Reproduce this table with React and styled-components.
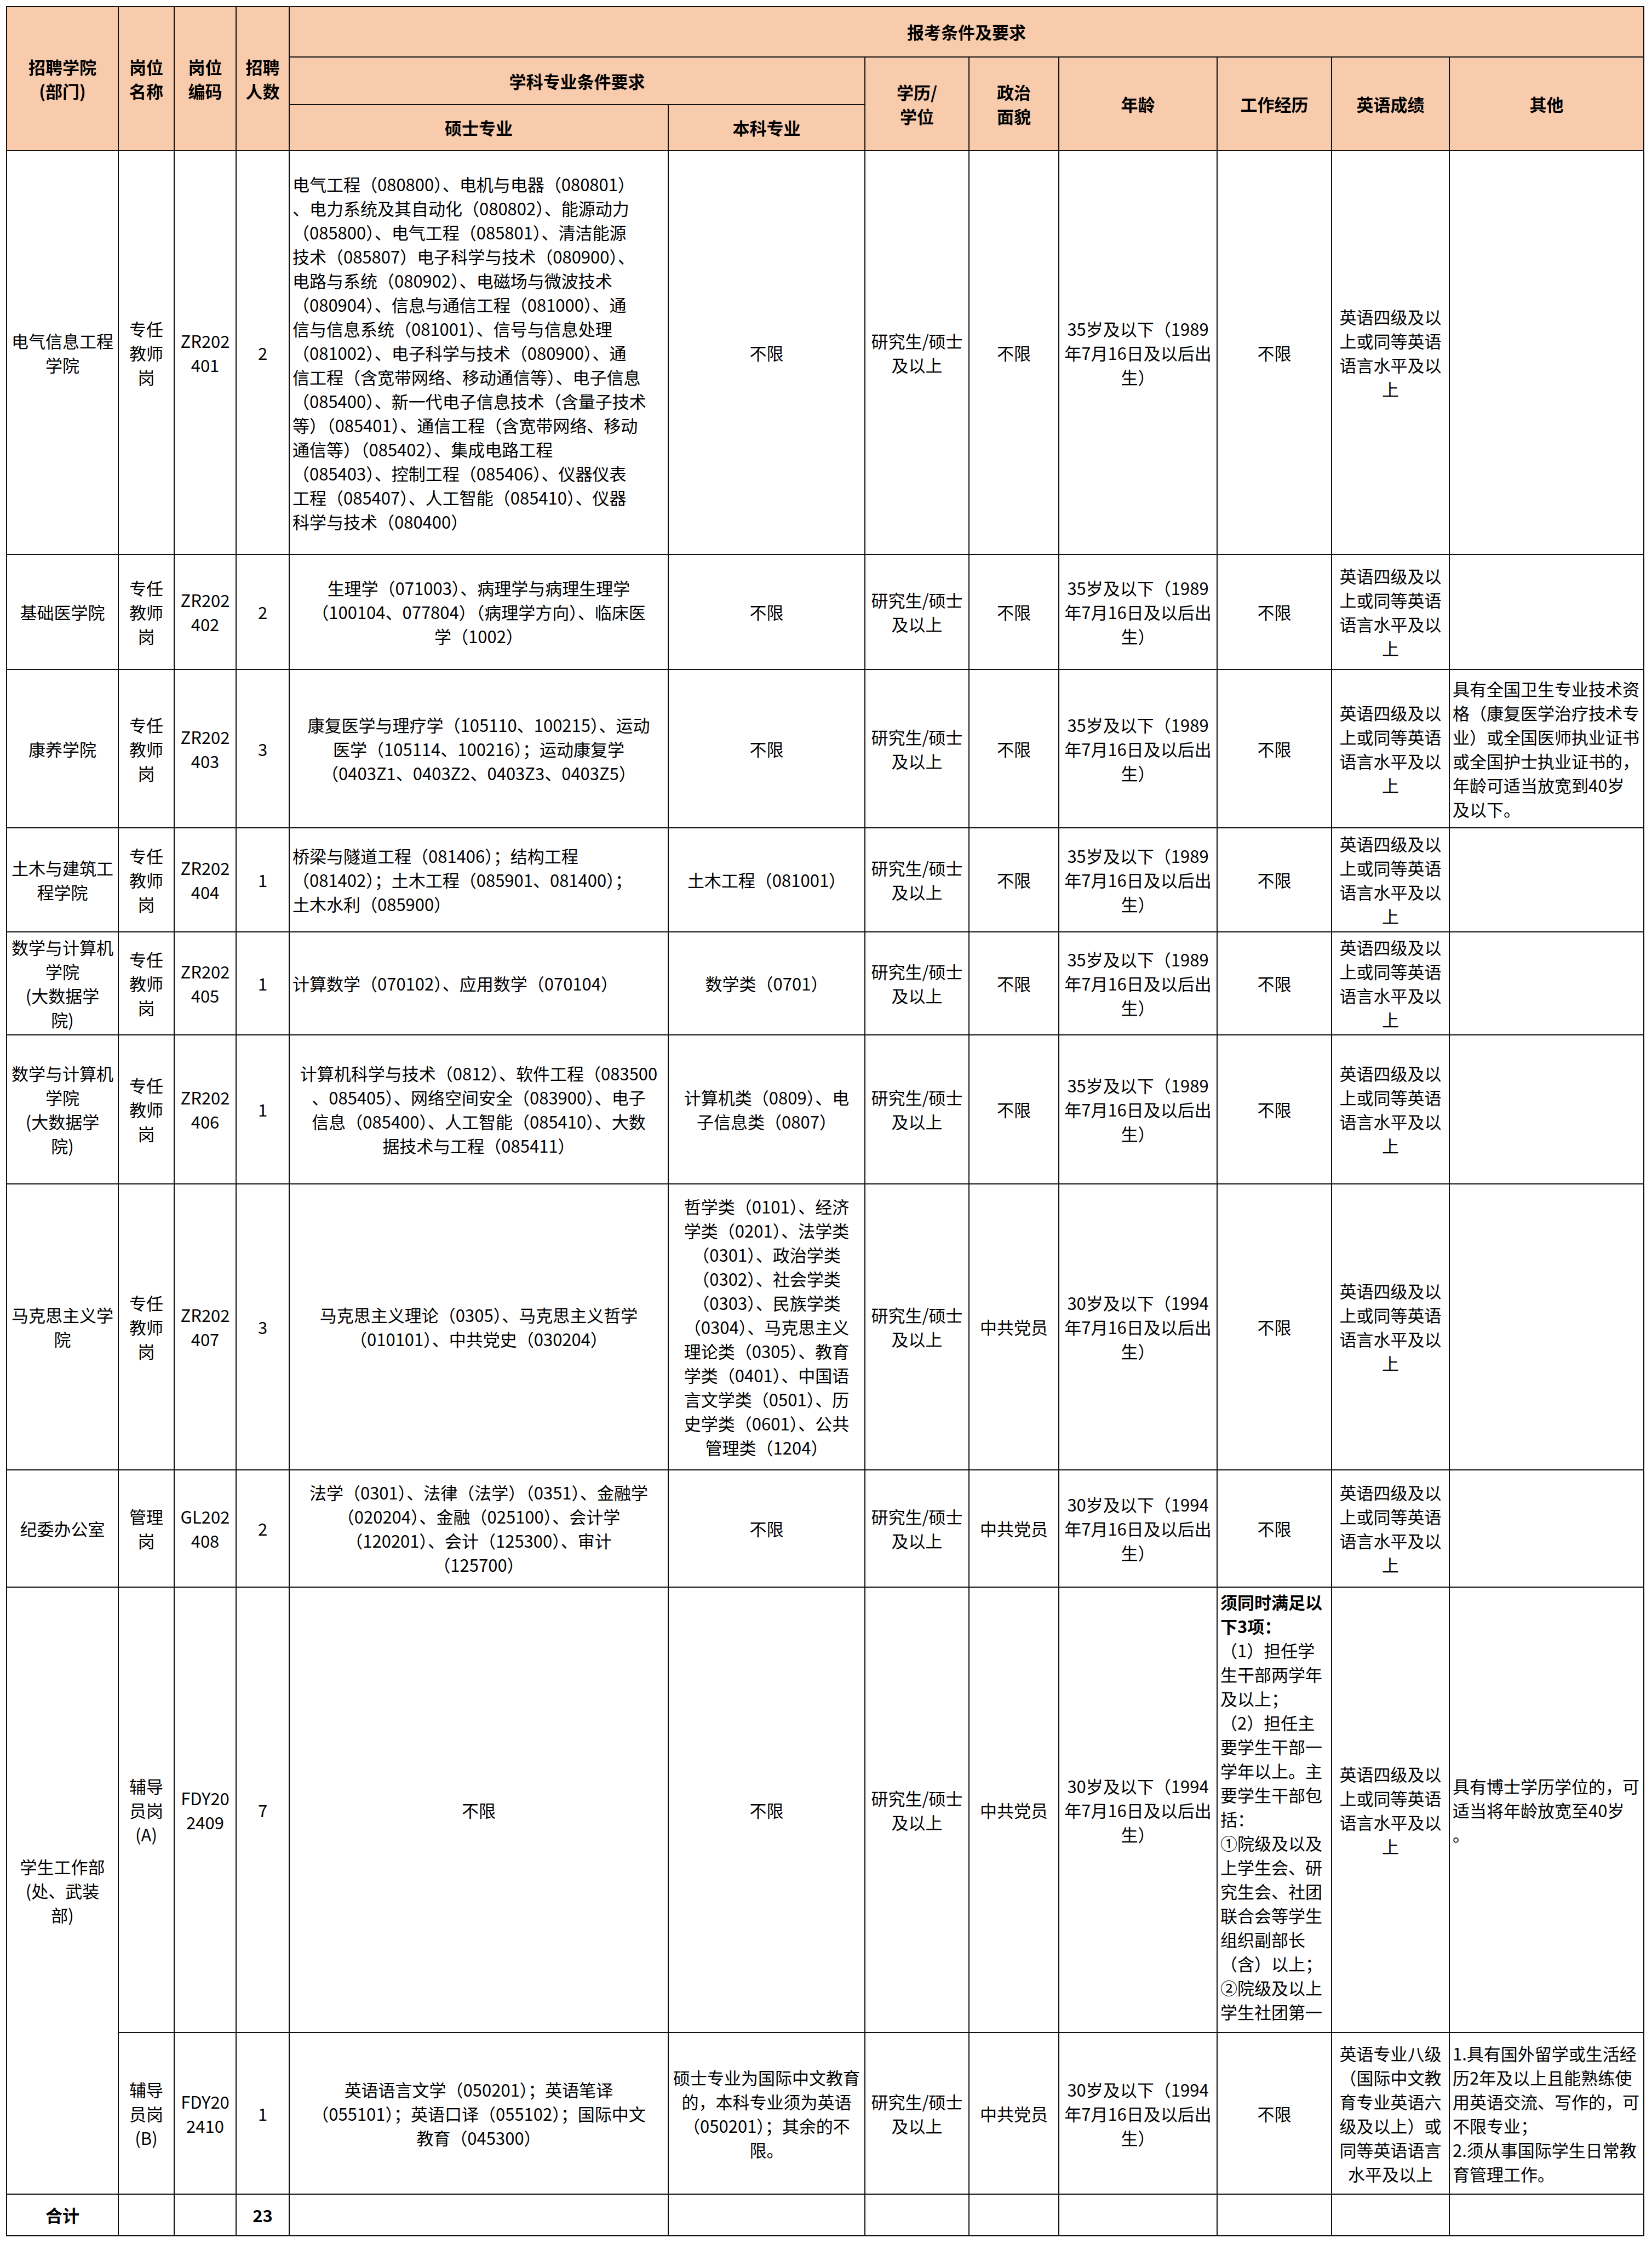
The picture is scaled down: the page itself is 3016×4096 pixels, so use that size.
import React from 'react';
import styled, { createGlobalStyle } from 'styled-components';

const COLS = [204, 102, 113, 97, 692, 359, 190, 164, 289, 209, 215, 355];

const DEG = ['研究生/硕士', '及以上'];
const AGE35 = ['35岁及以下（1989', '年7月16日及以后出', '生）'];
const AGE30 = ['30岁及以下（1994', '年7月16日及以后出', '生）'];
const CET4 = ['英语四级及以', '上或同等英语', '语言水平及以', '上'];
const TEACHER = ['专任', '教师', '岗'];
const MATH_DEPT = ['数学与计算机', '学院', '(大数据学', '院)'];

const rows = [
  {
    h: 737,
    dept: { lines: ['电气信息工程', '学院'] },
    post: TEACHER,
    code: ['ZR202', '401'],
    num: '2',
    master: {
      align: 'left',
      lines: [
        '电气工程（080800）、电机与电器（080801）',
        '、电力系统及其自动化（080802）、能源动力',
        '（085800）、电气工程（085801）、清洁能源',
        '技术（085807）电子科学与技术（080900）、',
        '电路与系统（080902）、电磁场与微波技术',
        '（080904）、信息与通信工程（081000）、通',
        '信与信息系统（081001）、信号与信息处理',
        '（081002）、电子科学与技术（080900）、通',
        '信工程（含宽带网络、移动通信等）、电子信息',
        '（085400）、新一代电子信息技术（含量子技术',
        '等）（085401）、通信工程（含宽带网络、移动',
        '通信等）（085402）、集成电路工程',
        '（085403）、控制工程（085406）、仪器仪表',
        '工程（085407）、人工智能（085410）、仪器',
        '科学与技术（080400）',
      ],
    },
    bachelor: { lines: ['不限'] },
    politics: ['不限'],
    age: AGE35,
    work: ['不限'],
    english: CET4,
  },
  {
    h: 210,
    dept: { lines: ['基础医学院'] },
    post: TEACHER,
    code: ['ZR202', '402'],
    num: '2',
    master: {
      lines: [
        '生理学（071003）、病理学与病理生理学',
        '（100104、077804）（病理学方向）、临床医',
        '学（1002）',
      ],
    },
    bachelor: { lines: ['不限'] },
    politics: ['不限'],
    age: AGE35,
    work: ['不限'],
    english: CET4,
  },
  {
    h: 289,
    dept: { lines: ['康养学院'] },
    post: TEACHER,
    code: ['ZR202', '403'],
    num: '3',
    master: {
      lines: [
        '康复医学与理疗学（105110、100215）、运动',
        '医学（105114、100216）；运动康复学',
        '（0403Z1、0403Z2、0403Z3、0403Z5）',
      ],
    },
    bachelor: { lines: ['不限'] },
    politics: ['不限'],
    age: AGE35,
    work: ['不限'],
    english: CET4,
    other: [
      '具有全国卫生专业技术资',
      '格（康复医学治疗技术专',
      '业）或全国医师执业证书',
      '或全国护士执业证书的，',
      '年龄可适当放宽到40岁',
      '及以下。',
    ],
  },
  {
    h: 190,
    dept: { lines: ['土木与建筑工', '程学院'] },
    post: TEACHER,
    code: ['ZR202', '404'],
    num: '1',
    master: {
      align: 'left',
      lines: [
        '桥梁与隧道工程（081406）；结构工程',
        '（081402）；土木工程（085901、081400）；',
        '土木水利（085900）',
      ],
    },
    bachelor: { lines: ['土木工程（081001）'] },
    politics: ['不限'],
    age: AGE35,
    work: ['不限'],
    english: CET4,
  },
  {
    h: 188,
    dept: { lines: MATH_DEPT },
    post: TEACHER,
    code: ['ZR202', '405'],
    num: '1',
    master: { align: 'left', lines: ['计算数学（070102）、应用数学（070104）'] },
    bachelor: { lines: ['数学类（0701）'] },
    politics: ['不限'],
    age: AGE35,
    work: ['不限'],
    english: CET4,
  },
  {
    h: 272,
    dept: { lines: MATH_DEPT },
    post: TEACHER,
    code: ['ZR202', '406'],
    num: '1',
    master: {
      lines: [
        '计算机科学与技术（0812）、软件工程（083500',
        '、085405）、网络空间安全（083900）、电子',
        '信息（085400）、人工智能（085410）、大数',
        '据技术与工程（085411）',
      ],
    },
    bachelor: { lines: ['计算机类（0809）、电', '子信息类（0807）'] },
    politics: ['不限'],
    age: AGE35,
    work: ['不限'],
    english: CET4,
  },
  {
    h: 522,
    dept: { lines: ['马克思主义学', '院'] },
    post: TEACHER,
    code: ['ZR202', '407'],
    num: '3',
    master: {
      lines: ['马克思主义理论（0305）、马克思主义哲学', '（010101）、中共党史（030204）'],
    },
    bachelor: {
      lines: [
        '哲学类（0101）、经济',
        '学类（0201）、法学类',
        '（0301）、政治学类',
        '（0302）、社会学类',
        '（0303）、民族学类',
        '（0304）、马克思主义',
        '理论类（0305）、教育',
        '学类（0401）、中国语',
        '言文学类（0501）、历',
        '史学类（0601）、公共',
        '管理类（1204）',
      ],
    },
    politics: ['中共党员'],
    age: AGE30,
    work: ['不限'],
    english: CET4,
  },
  {
    h: 214,
    dept: { lines: ['纪委办公室'] },
    post: ['管理', '岗'],
    code: ['GL202', '408'],
    num: '2',
    master: {
      lines: [
        '法学（0301）、法律（法学）（0351）、金融学',
        '（020204）、金融（025100）、会计学',
        '（120201）、会计（125300）、审计',
        '（125700）',
      ],
    },
    bachelor: { lines: ['不限'] },
    politics: ['中共党员'],
    age: AGE30,
    work: ['不限'],
    english: CET4,
  },
  {
    h: 813,
    dept: { lines: ['学生工作部', '(处、武装', '部)'], span: 2 },
    post: ['辅导', '员岗', '(A)'],
    code: ['FDY20', '2409'],
    num: '7',
    master: { lines: ['不限'] },
    bachelor: { lines: ['不限'] },
    politics: ['中共党员'],
    age: AGE30,
    // the sheet cuts this cell off after the last line shown
    workNote: {
      head: ['须同时满足以', '下3项：'],
      lines: [
        '（1）担任学',
        '生干部两学年',
        '及以上；',
        '（2）担任主',
        '要学生干部一',
        '学年以上。主',
        '要学生干部包',
        '括：',
        '①院级及以及',
        '上学生会、研',
        '究生会、社团',
        '联合会等学生',
        '组织副部长',
        '（含）以上；',
        '②院级及以上',
        '学生社团第一',
      ],
    },
    english: CET4,
    other: ['具有博士学历学位的，可', '适当将年龄放宽至40岁', '。'],
  },
  {
    h: 295,
    dept: null,
    post: ['辅导', '员岗', '(B)'],
    code: ['FDY20', '2410'],
    num: '1',
    master: {
      lines: [
        '英语语言文学（050201）；英语笔译',
        '（055101）；英语口译（055102）；国际中文',
        '教育（045300）',
      ],
    },
    bachelor: {
      lines: ['硕士专业为国际中文教育', '的，本科专业须为英语', '（050201）；其余的不', '限。'],
    },
    politics: ['中共党员'],
    age: AGE30,
    work: ['不限'],
    english: ['英语专业八级', '（国际中文教', '育专业英语六', '级及以上）或', '同等英语语言', '水平及以上'],
    other: [
      '1.具有国外留学或生活经',
      '历2年及以上且能熟练使',
      '用英语交流、写作的，可',
      '不限专业；',
      '2.须从事国际学生日常教',
      '育管理工作。',
    ],
  },
];

const Lines = ({ lines }) => (
  <>
    {lines.map((l, i) => (
      <Line key={i}>{l}</Line>
    ))}
  </>
);

const App = () => {
  return (
    <>
      <GlobalStyle />
      <Page>
        <Table>
          <colgroup>
            {COLS.map((w, i) => (
              <col key={i} style={{ width: w }} />
            ))}
          </colgroup>
          <thead>
            <tr style={{ height: 92 }}>
              <Th rowSpan={3}><Lines lines={['招聘学院', '(部门)']} /></Th>
              <Th rowSpan={3}><Lines lines={['岗位', '名称']} /></Th>
              <Th rowSpan={3}><Lines lines={['岗位', '编码']} /></Th>
              <Th rowSpan={3}><Lines lines={['招聘', '人数']} /></Th>
              <Th colSpan={8}>报考条件及要求</Th>
            </tr>
            <tr style={{ height: 87 }}>
              <Th colSpan={2}>学科专业条件要求</Th>
              <Th rowSpan={2}><Lines lines={['学历/', '学位']} /></Th>
              <Th rowSpan={2}><Lines lines={['政治', '面貌']} /></Th>
              <Th rowSpan={2}>年龄</Th>
              <Th rowSpan={2}>工作经历</Th>
              <Th rowSpan={2}>英语成绩</Th>
              <Th rowSpan={2}>其他</Th>
            </tr>
            <tr style={{ height: 84 }}>
              <Th>硕士专业</Th>
              <Th>本科专业</Th>
            </tr>
          </thead>
          <tbody>
            {rows.map((r, i) => (
              <tr key={i} style={{ height: r.h }}>
                {r.dept && (
                  <Td rowSpan={r.dept.span || 1}><Lines lines={r.dept.lines} /></Td>
                )}
                <Td><Lines lines={r.post} /></Td>
                <Td><Lines lines={r.code} /></Td>
                <Td>{r.num}</Td>
                <Td $align={r.master.align}><Lines lines={r.master.lines} /></Td>
                <Td $align={r.bachelor.align}><Lines lines={r.bachelor.lines} /></Td>
                <Td><Lines lines={DEG} /></Td>
                <Td><Lines lines={r.politics} /></Td>
                <Td><Lines lines={r.age} /></Td>
                {r.workNote ? (
                  <Td $align="left" $valign="top">
                    <Clip $h={r.h - 8}>
                      {r.workNote.head.map((l, k) => (
                        <Line key={k} $bold>{l}</Line>
                      ))}
                      <Lines lines={r.workNote.lines} />
                    </Clip>
                  </Td>
                ) : (
                  <Td><Lines lines={r.work} /></Td>
                )}
                <Td><Lines lines={r.english} /></Td>
                <Td $align="left">{r.other && <Lines lines={r.other} />}</Td>
              </tr>
            ))}
            <tr style={{ height: 76 }}>
              <Td $bold>合计</Td>
              <Td />
              <Td />
              <Td $bold>23</Td>
              {Array.from({ length: 8 }).map((_, i) => (
                <Td key={i} />
              ))}
            </tr>
          </tbody>
        </Table>
      </Page>
    </>
  );
};

const GlobalStyle = createGlobalStyle`
  body {
    margin: 0;
    background: #ffffff;
  }
`;

const Page = styled.div`
  padding: 11px 0 0 11px;
  font-family: "Noto Sans CJK SC", "Noto Sans", sans-serif;
  color: #000;
`;

const Table = styled.table`
  border-collapse: collapse;
  table-layout: fixed;
  width: 2989px;
  font-size: 31px;
  line-height: 44px;
`;

const Th = styled.th`
  background: #f8cbad;
  border: 2px solid #111;
  font-weight: 700;
  text-align: center;
  vertical-align: middle;
  padding: 0 5px;
`;

const Td = styled.td`
  border: 2px solid #111;
  text-align: ${({ $align }) => $align || 'center'};
  vertical-align: ${({ $valign }) => $valign || 'middle'};
  font-weight: ${({ $bold }) => ($bold ? 700 : 400)};
  padding: ${({ $valign }) => ($valign === 'top' ? '4px 5px 0' : '0 5px')};
`;

const Line = styled.span`
  display: block;
  white-space: nowrap;
  font-weight: ${({ $bold }) => ($bold ? 700 : 'inherit')};
`;

const Clip = styled.div`
  height: ${({ $h }) => $h}px;
  overflow: hidden;
`;

export default App;
